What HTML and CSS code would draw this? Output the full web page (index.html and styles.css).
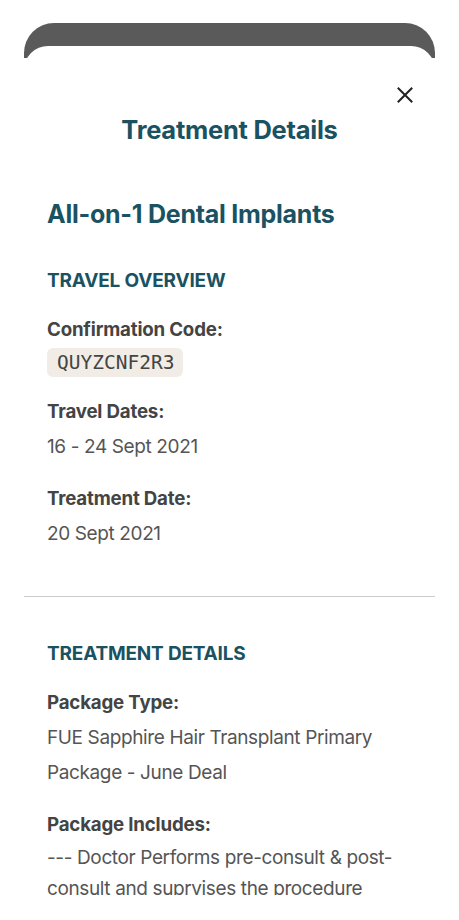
FILE: index.html
```html
<!DOCTYPE html>
<html lang="en">
<head>
<meta charset="utf-8">
<title>Treatment Details</title>
<link rel="stylesheet" href="styles.css">
</head>
<body>
<div class="backcard"></div>
<div class="sheet">
  <div class="close-row">
    <svg class="close" width="16" height="16" viewBox="0 0 16 16" aria-label="Close">
      <path d="M1.5 1.5 L14.5 14.5 M14.5 1.5 L1.5 14.5" stroke="#222" stroke-width="2" stroke-linecap="square" fill="none"/>
    </svg>
  </div>
  <h1 class="title">Treatment Details</h1>
  <section class="section first">
    <h2 class="subtitle">All-on-1 Dental Implants</h2>
    <h3 class="section-head head-travel">TRAVEL OVERVIEW</h3>
    <div class="field field-first">
      <div class="label">Confirmation Code:</div>
      <div class="code">QUYZCNF2R3</div>
    </div>
    <div class="field">
      <div class="label">Travel Dates:</div>
      <div class="value">16 - 24 Sept 2021</div>
    </div>
    <div class="field">
      <div class="label">Treatment Date:</div>
      <div class="value">20 Sept 2021</div>
    </div>
  </section>
  <hr class="divider">
  <section class="section">
    <h3 class="section-head head-treat">TREATMENT DETAILS</h3>
    <div class="field field-first">
      <div class="label">Package Type:</div>
      <div class="value">FUE Sapphire Hair Transplant Primary Package - June Deal</div>
    </div>
    <div class="field">
      <div class="label">Package Includes:</div>
      <div class="value value-tight">--- Doctor Performs pre-consult &amp; post-consult and suprvises the procedure</div>
    </div>
  </section>
</div>
</body>
</html>
```

FILE: styles.css
```css
* { box-sizing: border-box; }
html, body { margin: 0; padding: 0; background: #fff; }
body {
  font-family: Inter, "Noto Sans", Arial, sans-serif;
  width: 459px;
  height: 920px;
  overflow: hidden;
}
.backcard {
  margin: 23px 24px 0;
  height: 35px;
  background: #5a5a5a;
  border-radius: 30px 30px 0 0;
}
.sheet {
  margin: -12px 24px 0;
  height: 849px;
  background: #fff;
  border-radius: 24px 24px 0 0;
  overflow: hidden;
}
.close-row {
  display: flex;
  justify-content: flex-end;
  padding: 41px 22px 0 0;
  height: 57px;
}
.close { display: block; }
.title {
  margin: 12px 0 0;
  text-align: center;
  font-size: 25.5px;
  line-height: 30px;
  font-weight: 700;
  color: #1a5262;
  letter-spacing: -0.01em;
}
.section { padding: 0 23px; }
.subtitle {
  margin: 52px 0 0;
  font-size: 25px;
  line-height: 34px;
  font-weight: 700;
  color: #1a5262;
  letter-spacing: -0.01em;
}
.section-head {
  margin: 0;
  font-size: 19px;
  line-height: 24px;
  font-weight: 700;
  color: #1a5262;
  letter-spacing: -0.01em;
}
.head-travel { margin-top: 38px; }
.head-treat { margin-top: 45px; }
.field { margin-top: 17px; }
.field-first { margin-top: 19px; }
.label {
  font-size: 18.7px;
  line-height: 35px;
  font-weight: 700;
  color: #444;
  letter-spacing: -0.01em;
}
.value {
  font-size: 19px;
  line-height: 35px;
  color: #555;
  letter-spacing: -0.02em;
}
.value-tight { line-height: 31px; }
.code {
  display: inline-block;
  margin-top: 1px;
  height: 29px;
  padding: 0 9px 0 10px;
  background: #f1ede6;
  border-radius: 6px;
  font-family: "DejaVu Sans Mono", monospace;
  font-size: 19.5px;
  line-height: 29px;
  color: #444;
}
.divider {
  margin: 45px 0 0;
  border: 0;
  height: 1px;
  background: #cccccc;
}
```
